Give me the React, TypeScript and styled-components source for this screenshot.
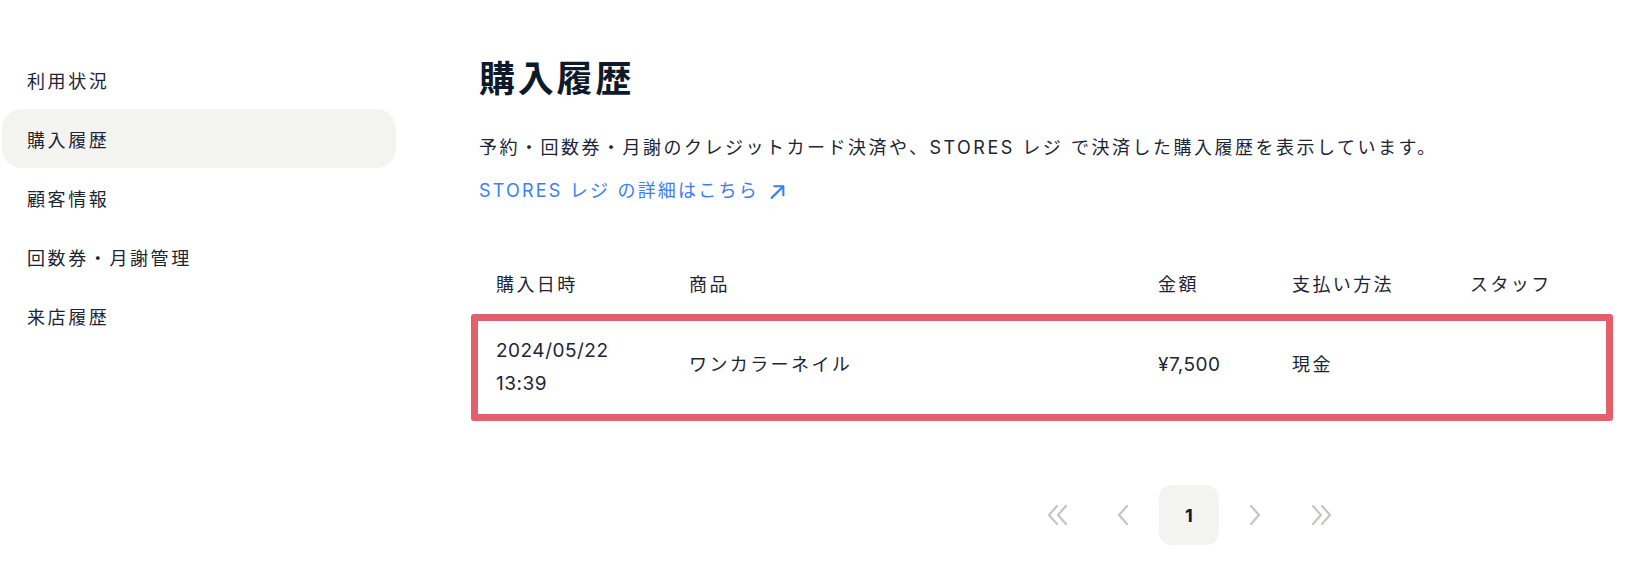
import React from 'react';
import styled, { createGlobalStyle } from 'styled-components';

const GlobalStyle = createGlobalStyle`
  html, body {
    margin: 0;
    padding: 0;
    background: #ffffff;
  }
  body {
    font-family: Inter, "Noto Sans CJK JP", sans-serif;
    color: #1c2536;
  }
`;

const Page = styled.div`
  display: flex;
  width: 1634px;
  height: 562px;
  overflow: hidden;
`;

const Sidebar = styled.nav`
  width: 394px;
  margin-left: 2px;
  padding-top: 50px;
  display: flex;
  flex-direction: column;
  flex-shrink: 0;
`;

const NavItem = styled.div<{ active?: boolean }>`
  height: 59px;
  display: flex;
  align-items: center;
  padding-left: 25px;
  border-radius: 20px;
  font-size: 18px;
  letter-spacing: 2.6px;
  color: #1c2536;
  background: ${({ active }) => (active ? '#f3f3ef' : 'transparent')};
`;

const Main = styled.main`
  flex: 1;
  padding-left: 83px;
  padding-top: 55px;
  display: flex;
  flex-direction: column;
`;

const Title = styled.h1`
  margin: 0;
  font-size: 36px;
  line-height: 48px;
  font-weight: 700;
  letter-spacing: 2.8px;
  color: #0e1a2c;
`;

const Description = styled.p`
  margin: 30px 0 0;
  font-size: 18px;
  line-height: 30px;
  letter-spacing: 2.5px;
`;

const Link = styled.a`
  margin-top: 13px;
  display: inline-flex;
  align-items: center;
  gap: 10px;
  font-size: 18px;
  line-height: 30px;
  letter-spacing: 2.2px;
  color: #3c7ef4;
  text-decoration: none;
  align-self: flex-start;
`;

const Table = styled.div`
  margin: 48px 0 0 -8px;
  width: 1142px;
`;

const HeaderRow = styled.div`
  display: grid;
  grid-template-columns: 193px 469px 134px 178px 1fr;
  height: 60px;
  align-items: center;
  padding-left: 25px;
  font-size: 18px;
  letter-spacing: 2.4px;
`;

const BodyRow = styled.div`
  display: grid;
  grid-template-columns: 193px 469px 134px 178px 1fr;
  align-items: center;
  height: 107px;
  box-sizing: border-box;
  padding-left: 18px;
  padding-bottom: 2px;
  border: 7px solid #e2606a;
  border-radius: 3px;
  font-size: 18px;
  letter-spacing: 2.4px;
`;

const Cell = styled.div<{ latin?: boolean }>`
  line-height: 33px;
  font-size: ${({ latin }) => (latin ? '19px' : '18px')};
  letter-spacing: ${({ latin }) => (latin ? '0.5px' : '2.4px')};
`;

const ProductCell = styled(Cell)`
  margin-top: -5px;
`;

const Pagination = styled.div`
  margin-top: 64px;
  margin-left: 548px;
  display: flex;
  gap: 6px;
`;

const PageButton = styled.div<{ current?: boolean }>`
  width: 60px;
  height: 60px;
  border-radius: 13px;
  display: flex;
  align-items: center;
  justify-content: center;
  background: ${({ current }) => (current ? '#f3f3ef' : 'transparent')};
  font-size: 18px;
  font-weight: 700;
  color: #0e1a2c;
`;

const Chevron = ({ dir, double }: { dir: 'left' | 'right'; double?: boolean }) => {
  const single = dir === 'left' ? 'M11 2 L3 11 L11 20' : 'M3 2 L11 11 L3 20';
  return (
    <svg width={double ? 23 : 14} height="22" viewBox={double ? '0 0 23 22' : '0 0 14 22'} fill="none">
      <path d={single} stroke="#c4c6c1" strokeWidth="2.2" strokeLinecap="round" strokeLinejoin="round" />
      {double && (
        <path
          d={dir === 'left' ? 'M20 2 L12 11 L20 20' : 'M12 2 L20 11 L12 20'}
          stroke="#c4c6c1"
          strokeWidth="2.2"
          strokeLinecap="round"
          strokeLinejoin="round"
        />
      )}
    </svg>
  );
};

const ArrowUpRight = () => (
  <svg width="17" height="17" viewBox="0 0 16 16" fill="none">
    <path d="M2.5 14 L13.5 3 M5 3 H13.5 V11.5" stroke="#3c7ef4" strokeWidth="2" strokeLinecap="round" strokeLinejoin="round" />
  </svg>
);

const navItems = ['利用状況', '購入履歴', '顧客情報', '回数券・月謝管理', '来店履歴'];

export default function App() {
  return (
    <>
      <GlobalStyle />
      <Page>
        <Sidebar>
          {navItems.map((label) => (
            <NavItem key={label} active={label === '購入履歴'}>
              {label}
            </NavItem>
          ))}
        </Sidebar>
        <Main>
          <Title>購入履歴</Title>
          <Description>
            予約・回数券・月謝のクレジットカード決済や、STORES レジ で決済した購入履歴を表示しています。
          </Description>
          <Link href="#">
            <span>STORES レジ の詳細はこちら</span>
            <ArrowUpRight />
          </Link>
          <Table>
            <HeaderRow>
              <Cell>購入日時</Cell>
              <Cell>商品</Cell>
              <Cell>金額</Cell>
              <Cell>支払い方法</Cell>
              <Cell>スタッフ</Cell>
            </HeaderRow>
            <BodyRow>
              <Cell latin>
                2024/05/22
                <br />
                13:39
              </Cell>
              <ProductCell>ワンカラーネイル</ProductCell>
              <ProductCell latin>¥7,500</ProductCell>
              <ProductCell>現金</ProductCell>
              <Cell />
            </BodyRow>
          </Table>
          <Pagination>
            <PageButton>
              <Chevron dir="left" double />
            </PageButton>
            <PageButton>
              <Chevron dir="left" />
            </PageButton>
            <PageButton current>1</PageButton>
            <PageButton>
              <Chevron dir="right" />
            </PageButton>
            <PageButton>
              <Chevron dir="right" double />
            </PageButton>
          </Pagination>
        </Main>
      </Page>
    </>
  );
}
